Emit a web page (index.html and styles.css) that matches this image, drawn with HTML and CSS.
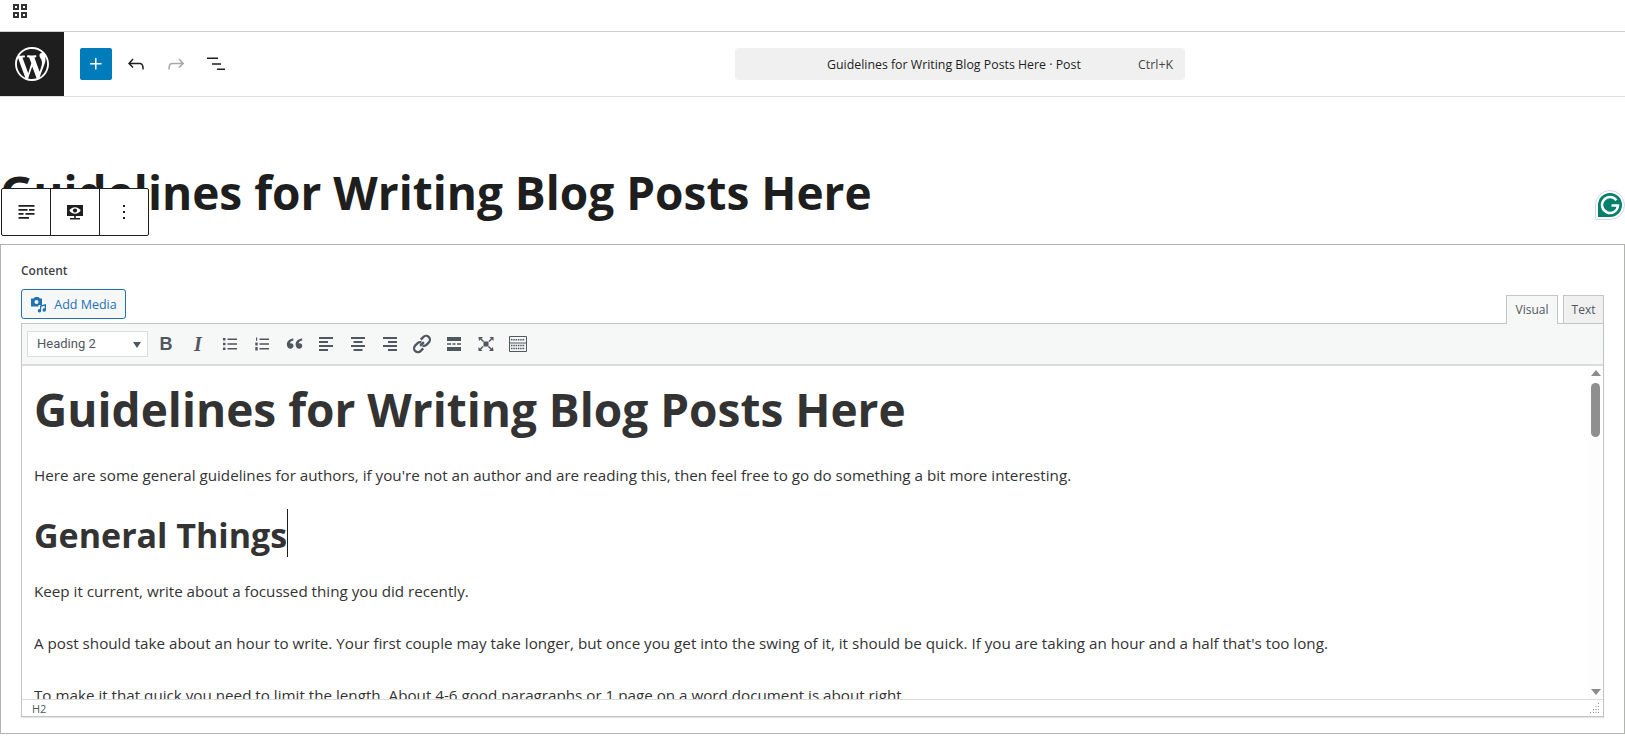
FILE: index.html
```html
<!DOCTYPE html>
<html lang="en">
<head>
    <meta charset="UTF-8">
    <title>Edit Post</title>
    <link rel="stylesheet" href="styles.css">
</head>
<body>
    <div class="admin-bar">
        <svg class="grid-icon" width="16" height="16" viewBox="0 0 16 16" fill="none" stroke="#333" stroke-width="2">
            <rect x="2" y="2" width="4" height="4"/><rect x="10" y="2" width="4" height="4"/>
            <rect x="2" y="10" width="4" height="4"/><rect x="10" y="10" width="4" height="4"/>
        </svg>
    </div>

    <header class="editor-header">
        <a class="wp-logo">
            <svg width="34" height="34" viewBox="0 0 20 20" fill="#fff">
                <path d="M20 10c0-5.52-4.48-10-10-10S0 4.48 0 10s4.48 10 10 10 10-4.48 10-10zM7.78 15.37L4.37 6.22c.55-.02 1.17-.08 1.17-.08.5-.06.44-1.13-.06-1.11 0 0-1.45.11-2.37.11-.18 0-.37 0-.58-.01C4.12 2.69 6.87 1.11 10 1.11c2.33 0 4.45.87 6.05 2.34-.68-.11-1.65.39-1.65 1.58 0 .74.45 1.36.9 2.1.35.61.55 1.36.55 2.46 0 1.49-1.4 5-1.4 5l-3.03-8.37c.54-.02.82-.17.82-.17.5-.05.44-1.25-.06-1.22 0 0-1.44.12-2.38.12-.87 0-2.33-.12-2.33-.12-.5-.03-.56 1.2-.06 1.22l.92.08 1.26 3.41zM17.41 10c.24-.64.74-1.87.43-4.25.7 1.29 1.05 2.71 1.05 4.25 0 3.29-1.73 6.24-4.4 7.78.97-2.59 1.94-5.2 2.92-7.78zM6.1 18.09C3.12 16.65 1.11 13.53 1.11 10c0-1.3.23-2.48.72-3.59C3.25 10.3 4.67 14.2 6.1 18.09zm4.03-6.63l2.58 6.98c-.86.29-1.76.45-2.71.45-.79 0-1.57-.11-2.29-.33.81-2.38 1.62-4.74 2.42-7.1z"/>
            </svg>
        </a>
        <div class="header-tools">
            <button class="add-btn">
                <svg width="24" height="24" viewBox="0 0 24 24" fill="#fff"><path d="M11 12.5V17.5H12.5V12.5H17.5V11H12.5V6H11V11H6V12.5H11Z"/></svg>
            </button>
            <button class="tool-btn">
                <svg width="24" height="24" viewBox="0 0 24 24" fill="#1e1e1e"><path d="M18.3 11.7c-.6-.6-1.4-.9-2.3-.9H6.7l2.9-3.3-1.1-1-4.5 5L8.500 16l1-1-2.700-2.700H16c.5 0 .9.2 1.300.5 1 1 1 3.400 1 4.500v.3h1.500v-.2c0-1.500 0-4.300-1.500-5.700z"/></svg>
            </button>
            <button class="tool-btn">
                <svg width="24" height="24" viewBox="0 0 24 24" fill="#a7a7a7"><path d="M15.6 6.500l-1.100 1 2.900 3.300H8c-.9 0-1.700.3-2.300.9-1.400 1.500-1.400 4.200-1.400 5.600v.2h1.500v-.3c0-1.100 0-3.500 1-4.500.3-.3.7-.5 1.300-.5h9.200L14.500 15l1.100 1.100 4.600-4.600-4.600-5z"/></svg>
            </button>
            <button class="tool-btn">
                <svg width="24" height="24" viewBox="0 0 24 24" fill="#1e1e1e"><path d="M3 5.500h11V7H3zM8 11.200h9v1.500H8zM13 16.500h8V18h-8z"/></svg>
            </button>
        </div>
        <div class="command-bar">
            <span class="command-title">Guidelines for Writing Blog Posts Here · Post</span>
            <span class="command-key">Ctrl+K</span>
        </div>
    </header>

    <main class="editor-main">
        <h1 class="post-title">Guidelines for Writing Blog Posts Here</h1>

        <div class="block-toolbar">
            <button class="block-btn">
                <svg width="24" height="24" viewBox="0 0 24 24" fill="#1e1e1e"><path d="M4.500 5h16v1.800h-16zM4.500 9h9v1.800h-9zM15 9h5.500v1.800H15zM4.500 13h5v1.800h-5zM11.500 13h9v1.800h-9zM4.500 17H15v1.800H4.500z"/></svg>
            </button>
            <button class="block-btn">
                <svg width="24" height="24" viewBox="0 0 24 24"><path fill="#1e1e1e" d="M4 5h16v11h-7.200v2H17v1.500H7V18h4.200v-2H4z"/><path fill="#fff" d="M12 7.300c-2.600 0-4.600 1.500-5.600 3.200 1 1.700 3 3.200 5.600 3.200s4.600-1.500 5.600-3.200c-1-1.700-3-3.200-5.600-3.200z"/><circle cx="12" cy="10.500" r="2.100" fill="#1e1e1e"/></svg>
            </button>
            <button class="block-btn">
                <svg width="24" height="24" viewBox="0 0 24 24" fill="#1e1e1e"><path d="M11 5h2v2h-2zM11 11h2v2h-2zM11 17h2v2h-2z"/></svg>
            </button>
        </div>

        <span class="grammarly">
            <svg width="30" height="30" viewBox="0 0 30 30">
                <path fill="#fff" stroke="#d5d8e4" d="M.5 15a14.500 14.500 0 1 1 14.500 14.500H.5z"/>
                <path fill="#04806b" d="M3 15a12 12 0 1 1 12 12H3z"/>
                <path fill="none" stroke="#fff" stroke-width="2.500" d="M21.500 10.300a8 8 0 1 0 1.500 5.200h-6.500"/>
            </svg>
        </span>

        <section class="meta-box">
            <div class="content-label">Content</div>
            <div class="media-row">
                <button class="add-media">
                    <svg width="18" height="18" viewBox="0 0 18 18" fill="#2271b1">
                        <path d="M1 3.500h2.500L5 2h3.500l1.300 1.500h2.200v6.500H8.500v1.500H1zM6.500 5a2 2 0 1 0 0 4 2 2 0 0 0 0-4z"/>
                        <path d="M10 10.500l6-1.500v6a1.700 1.700 0 1 1-1.300-1.700v-2.500l-3.500.9v4a1.700 1.700 0 1 1-1.200-1.600z"/>
                    </svg>
                    Add Media
                </button>
                <div class="editor-tabs">
                    <span class="editor-tab active">Visual</span>
                    <span class="editor-tab">Text</span>
                </div>
            </div>

            <div class="mce-box">
                <div class="mce-toolbar">
                    <div class="format-select">Heading 2<span class="select-arrow"></span></div>
                    <span class="mce-icon icon-letter">B</span>
                    <span class="mce-icon icon-letter italic">I</span>
                    <svg class="mce-icon" viewBox="0 0 20 20" fill="#50575e"><path d="M3 4h2.500v2.500H3zM3 8.800h2.500v2.500H3zM3 13.500h2.500V16H3zM7.500 4.500H17V6H7.500zM7.500 9.300H17v1.400H7.500zM7.500 14H17v1.500H7.500z"/></svg>
                    <svg class="mce-icon" viewBox="0 0 20 20" fill="#50575e"><path d="M4 3.500h1.200v3.200H4zM3.300 8.500h2.400v3H3.300zM3.300 13h2.400v3.500H3.300zM7.500 4.500H17V6H7.500zM7.500 9.300H17v1.400H7.500zM7.500 14H17v1.500H7.500z"/></svg>
                    <svg class="mce-icon" viewBox="2 2 16 16" fill="#50575e"><path d="M9.500 5.500v1.600c-2 .4-2.800 1.500-2.800 2.400.3-.1.600-.2.900-.2 1.200 0 2 .9 2 2.100 0 1.300-1 2.300-2.400 2.300-1.700 0-2.900-1.400-2.900-3.400 0-2.600 1.900-4.500 5.200-4.800zM16.500 5.500v1.600c-2 .4-2.800 1.500-2.800 2.400.3-.1.600-.2.900-.2 1.200 0 2 .9 2 2.100 0 1.300-1 2.300-2.400 2.300-1.700 0-2.900-1.400-2.900-3.400 0-2.600 1.900-4.500 5.200-4.800z"/></svg>
                    <svg class="mce-icon" viewBox="0 0 20 20" fill="#50575e"><path d="M3 3h14v2H3zM3 7h9v2H3zM3 11h14v2H3zM3 15h9v2H3z"/></svg>
                    <svg class="mce-icon" viewBox="0 0 20 20" fill="#50575e"><path d="M3 3h14v2H3zM5.500 7h9v2h-9zM3 11h14v2H3zM5.500 15h9v2h-9z"/></svg>
                    <svg class="mce-icon" viewBox="0 0 20 20" fill="#50575e"><path d="M3 3h14v2H3zM8 7h9v2H8zM3 11h14v2H3zM8 15h9v2H8z"/></svg>
                    <svg class="mce-icon" viewBox="2 2 16 16" fill="none" stroke="#50575e" stroke-width="1.800"><path d="M8.500 11.500l3-3M9 6.500l2-2a3 3 0 0 1 4.500 4.200l-2 2a3 3 0 0 1-3 .6M11 13.500l-2 2a3 3 0 0 1-4.500-4.200l2-2a3 3 0 0 1 3-.6"/></svg>
                    <svg class="mce-icon" viewBox="0 0 20 20" fill="#50575e"><path d="M3 3h14v4H3zM3 9.300h4v1.400H3zM8.500 9.300h3v1.400h-3zM13 9.300h4v1.400h-4zM3 13h14v4H3z"/></svg>
                    <svg class="mce-icon" viewBox="0 0 20 20" fill="#50575e"><path d="M2.500 3H7L5.500 4.500 8 7 7 8 4.500 5.500 3 7zM17.500 3v4L16 5.500 13.500 8l-1-1L15 4.500 13.500 3zM2.500 17v-4L4 14.500 6.500 12l1 1L5 15.500 6.500 17zM17.500 17H13l1.500-1.500L12 13l1-1 2.500 2.500L17 13zM7.500 7.500h5v5h-5z"/></svg>
                    <svg class="mce-icon" viewBox="0 0 20 20" fill="none" stroke="#50575e"><path d="M1.500 2.500h17v15h-17zM1.500 9h17"/><path stroke-width="1.500" stroke-dasharray="1.500 .8" d="M3 5.800h14M3 11.500h14M3 14.500h14"/></svg>
                </div>

                <div class="mce-body">
                    <div class="mce-content">
                        <h1>Guidelines for Writing Blog Posts Here</h1>
                        <p>Here are some general guidelines for authors, if you're not an author and are reading this, then feel free to go do something a bit more interesting.</p>
                        <h2><span class="caret">General Things</span></h2>
                        <p>Keep it current, write about a focussed thing you did recently.</p>
                        <p>A post should take about an hour to write. Your first couple may take longer, but once you get into the swing of it, it should be quick. If you are taking an hour and a half that's too long.</p>
                        <p>To make it that quick you need to limit the length. About 4-6 good paragraphs or 1 page on a word document is about right.</p>
                    </div>
                    <div class="scrollbar">
                        <span class="arrow-up"></span>
                        <span class="scroll-thumb"></span>
                        <span class="arrow-down"></span>
                    </div>
                </div>

                <div class="mce-status">
                    <span>H2</span>
                    <svg width="10" height="10" viewBox="0 0 10 10" fill="#8c8f94"><path d="M8 0h1v1H8zM5.500 3h1v1h-1zM8 3h1v1H8zM3 6h1v1H3zM5.500 6h1v1h-1zM8 6h1v1H8zM0 9h1v1H0zM3 9h1v1H3zM5.500 9h1v1h-1zM8 9h1v1H8z"/></svg>
                </div>
            </div>
        </section>
    </main>
</body>
</html>
```

FILE: styles.css
```css
* {
    box-sizing: border-box;
}
html, body {
    height: 100%;
}
body {
    font-family: "Open Sans", "Noto Sans", Arial, sans-serif;
    background-color: #fff;
    color: #1e1e1e;
    margin: 0;
    overflow: hidden;
}
button {
    font-family: inherit;
    background: none;
    border: none;
    padding: 0;
    display: flex;
    align-items: center;
    justify-content: center;
}

/* top strip */
.admin-bar {
    height: 32px;
    border-bottom: 1px solid #ccc;
    padding: 3px 0 0 12px;
}
.grid-icon {
    display: block;
}

/* editor header */
.editor-header {
    height: 65px;
    display: flex;
    align-items: center;
    border-bottom: 1px solid #e0e0e0;
}
.wp-logo {
    width: 64px;
    height: 64px;
    background-color: #1e1e1e;
    display: flex;
    align-items: center;
    justify-content: center;
}
.header-tools {
    display: flex;
    align-items: center;
    margin-left: 16px;
    width: 655px;
}
.add-btn {
    width: 32px;
    height: 32px;
    background-color: #007cba;
    border-radius: 2px;
    margin-right: 4px;
}
.tool-btn {
    width: 40px;
    height: 32px;
}
.command-bar {
    width: 450px;
    height: 32px;
    background-color: #f0f0f0;
    border-radius: 4px;
    display: flex;
    align-items: center;
    font-size: 12.35px;
    padding: 0 12px 0 92px;
}
.command-title {
    flex: 1;
}
.command-key {
    color: #444;
}

/* post title and block toolbar */
.editor-main {
    position: relative;
    padding-top: 63px;
}
.post-title {
    font-size: 46px;
    line-height: 64px;
    font-weight: 700;
    margin: 0 0 20px;
    height: 64px;
    white-space: nowrap;
}
.block-toolbar {
    position: absolute;
    left: 1px;
    top: 91px;
    display: flex;
    height: 48px;
    background-color: #fff;
    border: 1px solid #1e1e1e;
    border-radius: 2px;
}
.block-btn {
    width: 49px;
    height: 46px;
    border-right: 1px solid #1e1e1e;
}
.block-btn:last-child {
    width: 48px;
    border-right: none;
}
.grammarly {
    position: absolute;
    right: 0;
    top: 93px;
    line-height: 0;
}

/* meta box */
.meta-box {
    height: 490px;
    border: 1px solid #b0b3b0;
    padding: 17px 20px 0;
}
.content-label {
    font-size: 12px;
    font-weight: 600;
    color: #3c434a;
    line-height: 18px;
}
.media-row {
    display: flex;
    justify-content: space-between;
    align-items: flex-end;
    margin-top: 9px;
}
.add-media {
    width: 105px;
    height: 30px;
    background-color: #f6f7f7;
    border: 1px solid #2271b1;
    border-radius: 3px;
    color: #2271b1;
    font-size: 12.5px;
    gap: 6px;
    margin-bottom: 4px;
}
.editor-tabs {
    display: flex;
    gap: 5px;
}
.editor-tab {
    width: 41px;
    height: 28px;
    border: 1px solid #c3c4c7;
    border-bottom: none;
    background-color: #f0f0f1;
    color: #50575e;
    font-size: 12px;
    line-height: 28px;
    text-align: center;
}
.editor-tab.active {
    width: 52px;
    height: 29px;
    background-color: #f6f7f7;
    margin-bottom: -1px;
    position: relative;
}

/* tinymce box */
.mce-box {
    border: 1px solid #c3c4c7;
    box-shadow: 0 1px 1px rgba(0, 0, 0, 0.1);
    height: 394px;
    display: flex;
    flex-direction: column;
    background-color: #fff;
}
.mce-toolbar {
    height: 42px;
    flex-shrink: 0;
    background-color: #f6f7f7;
    border-bottom: 2px solid #dcdcde;
    display: flex;
    align-items: center;
    padding-left: 5px;
    gap: 12px;
}
.format-select {
    width: 121px;
    height: 26px;
    margin-right: -4px;
    background-color: #fff;
    border: 1px solid #dcdcde;
    font-family: Roboto, Arial, sans-serif;
    font-size: 13px;
    line-height: 24px;
    color: #50575e;
    padding-left: 9px;
    position: relative;
}
.select-arrow {
    position: absolute;
    right: 6px;
    top: 10px;
    border-left: 4px solid transparent;
    border-right: 4px solid transparent;
    border-top: 6px solid #50575e;
}
.mce-icon {
    width: 20px;
    height: 20px;
    flex-shrink: 0;
}
.icon-letter {
    font-family: "Liberation Sans", Arial, sans-serif;
    font-size: 18px;
    font-weight: 700;
    color: #50575e;
    line-height: 20px;
    text-align: center;
}
.icon-letter.italic {
    font-style: italic;
    font-family: "Liberation Serif", serif;
    font-size: 20px;
}
.mce-body {
    flex: 1;
    display: flex;
    min-height: 0;
    overflow: hidden;
}
.mce-content {
    flex: 1;
    padding: 0 12px;
    font-size: 15.2px;
    line-height: 24px;
    color: #333;
}
.mce-content h1 {
    font-size: 46px;
    line-height: 60px;
    font-weight: 700;
    margin: 13px 0 24px;
    white-space: nowrap;
}
.mce-content h2 {
    font-size: 34px;
    line-height: 48px;
    font-weight: 700;
    margin: 22px 0 20px;
}
.mce-content p {
    margin: 0;
    white-space: nowrap;
}
.mce-content p + p {
    margin-top: 28px;
}
.caret {
    border-right: 1px solid #1e1e1e;
    display: inline-block;
    line-height: 44px;
    padding-top: 4px;
}
.scrollbar {
    width: 15px;
    flex-shrink: 0;
    background-color: #fdfdfd;
    display: flex;
    flex-direction: column;
    align-items: center;
    position: relative;
    padding-top: 4px;
}
.arrow-up {
    border-left: 5px solid transparent;
    border-right: 5px solid transparent;
    border-bottom: 6px solid #8a8a8a;
}
.scroll-thumb {
    width: 9px;
    height: 54px;
    margin-top: 7px;
    border-radius: 5px;
    background-color: #8f8f8f;
}
.arrow-down {
    position: absolute;
    bottom: 4px;
    border-left: 5px solid transparent;
    border-right: 5px solid transparent;
    border-top: 6px solid #8a8a8a;
}
.mce-status {
    height: 17px;
    flex-shrink: 0;
    border-top: 1px solid #dcdcde;
    display: flex;
    justify-content: space-between;
    align-items: center;
    font-size: 11px;
    color: #50575e;
    padding: 0 3px 0 10px;
}
```
